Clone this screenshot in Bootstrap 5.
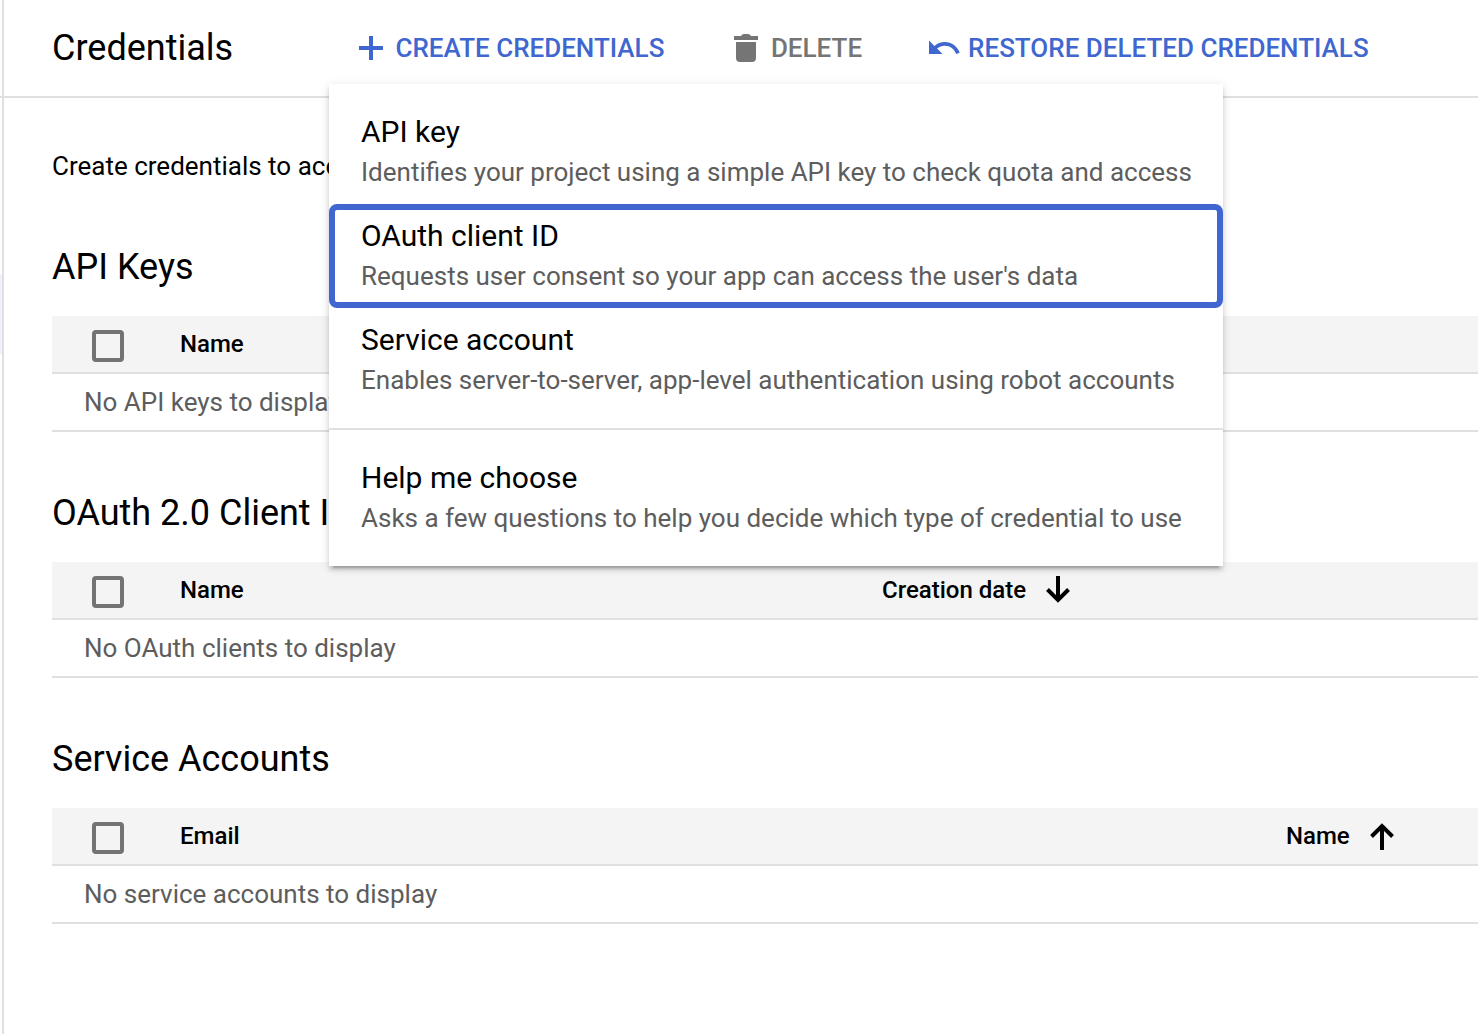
<!DOCTYPE html>
<html lang="en">
<head>
<meta charset="utf-8">
<meta name="viewport" content="width=device-width, initial-scale=1">
<title>Credentials</title>
<link href="https://cdn.jsdelivr.net/npm/bootstrap@5.3.0/dist/css/bootstrap.min.css" rel="stylesheet">
<style>
  :root { --accent: #4067d0; --line: #e0e0e0; --muted: #5d5d5d; --icon: #757575; }
  body { font-family: Roboto, "Liberation Sans", sans-serif; font-size: 26px; line-height: 36px; color: #000; background: #fff; height: 100vh; overflow: hidden; }
  .side-rail { width: 4px; border-right: 2px solid var(--line); padding-top: 274px; }
  .side-active { height: 80px; background: #eef1fb; }
  .topbar { height: 98px; border-bottom: 2px solid var(--line); margin-left: -4px; padding-left: 52px; }
  .page-title { font-size: 36px; line-height: 40px; font-weight: 400; width: 307px; }
  .action { --bs-btn-font-size: 26px; --bs-btn-line-height: 36px; --bs-btn-font-weight: 500; --bs-btn-padding-x: 0; --bs-btn-padding-y: 0; --bs-btn-border-width: 0; --bs-btn-color: var(--accent); --bs-btn-hover-color: var(--accent); --bs-btn-active-color: var(--accent); gap: 12.5px; }
  .action-off { --bs-btn-color: var(--icon); margin-left: 69.5px; gap: 13px; }
  .action-restore { margin-left: 64px; gap: 6px; }
  .create-menu.dropdown-menu { top: 54px; left: -30px; width: 894px; padding: 16px 0; margin: 0; border: 0; border-radius: 0; background: #fff; font-size: 26px;
    box-shadow: 0 6px 2px -4px rgba(0,0,0,.2), 0 4px 4px 0 rgba(0,0,0,.14), 0 2px 10px 0 rgba(0,0,0,.12); }
  .create-menu .dropdown-item { height: 104px; padding: 12px 32px; line-height: 40px; color: var(--muted); background: #fff; }
  .create-menu .item-title { font-size: 30px; color: #000; }
  .create-menu .item-focus { padding: 6px 26px; border: 6px solid var(--accent); border-radius: 8px; }
  .create-menu .dropdown-divider { margin: 16px 0; border-top: 2px solid var(--line); opacity: 1; }
  .content { padding: 50px 0 0 48px; }
  .intro { margin-bottom: 63px; }
  .group-title { font-size: 36px; line-height: 40px; font-weight: 400; margin-bottom: 29px; }
  .group { margin-bottom: 61px; }
  .cred-table { table-layout: fixed; border-collapse: separate; border-spacing: 0; color: #000; margin: 0; }
  .cred-table > thead > tr > th { height: 58px; padding: 0; background: #f4f4f4; border-bottom: 2px solid var(--line); font-size: 24px; line-height: 36px; font-weight: 500; vertical-align: middle; }
  .cred-table > tbody > tr > td { height: 58px; padding: 0 0 0 32px; border-bottom: 2px solid var(--line); color: var(--muted); background: #fff; vertical-align: middle; }
  .col-check { width: 128px; }
  .col-name { width: 702px; }
  .col-email { width: 1106px; }
  .cred-table .form-check-input { display: block; width: 32px; height: 32px; margin: 4px 0 0 40px; border: 4px solid #737373; border-radius: 4px; background-color: transparent; }
  svg { display: block; flex: none; }
</style>
</head>
<body>
<div class="d-flex h-100">
  <aside class="side-rail flex-shrink-0"><div class="side-active"></div></aside>
  <main class="flex-grow-1">
    <header class="topbar d-flex align-items-center">
      <h1 class="page-title mb-0">Credentials</h1>
      <div class="dropdown">
        <button type="button" class="btn action d-flex align-items-center" aria-expanded="true">
          <svg width="24" height="24" viewBox="0 0 24 24" fill="currentColor"><path d="M10 0h4v10h10v4H14v10h-4V14H0v-4h10z"/></svg>
          CREATE CREDENTIALS
        </button>
        <ul class="dropdown-menu create-menu show">
          <li><a class="dropdown-item" href="#"><div class="item-title">API key</div><div>Identifies your project using a simple API key to check quota and access</div></a></li>
          <li><a class="dropdown-item item-focus" href="#"><div class="item-title">OAuth client ID</div><div>Requests user consent so your app can access the user's data</div></a></li>
          <li><a class="dropdown-item" href="#"><div class="item-title">Service account</div><div>Enables server-to-server, app-level authentication using robot accounts</div></a></li>
          <li><hr class="dropdown-divider"></li>
          <li><a class="dropdown-item" href="#"><div class="item-title">Help me choose</div><div>Asks a few questions to help you decide which type of credential to use</div></a></li>
        </ul>
      </div>
      <button type="button" class="btn action action-off d-flex align-items-center">
        <svg width="24" height="28" viewBox="0 0 24 28" fill="currentColor"><path d="M0 2h7Q8 0 10 0h4q2 0 3 2h7v4H0zM2 8h20v16q0 4-4 4H6q-4 0-4-4z"/></svg>
        DELETE
      </button>
      <button type="button" class="btn action action-restore d-flex align-items-center">
        <svg width="36" height="36" viewBox="0 0 24 24" fill="currentColor"><path d="M12.5 8c-2.65 0-5.05.99-6.9 2.6L2 7v9h9l-3.62-3.62c1.39-1.16 3.16-1.88 5.12-1.88 3.54 0 6.55 2.31 7.6 5.5l2.37-.78C21.08 11.03 17.15 8 12.5 8z"/></svg>
        RESTORE DELETED CREDENTIALS
      </button>
    </header>
    <div class="content">
      <p class="intro">Create credentials to access</p>
      <section class="group">
        <h2 class="group-title">API Keys</h2>
        <table class="table cred-table">
          <thead><tr><th class="col-check"><input class="form-check-input" type="checkbox" aria-label="Select all"></th><th>Name</th></tr></thead>
          <tbody><tr><td colspan="2">No API keys to display</td></tr></tbody>
        </table>
      </section>
      <section class="group">
        <h2 class="group-title">OAuth 2.0 Client IDs</h2>
        <table class="table cred-table">
          <thead><tr><th class="col-check"><input class="form-check-input" type="checkbox" aria-label="Select all"></th><th class="col-name">Name</th>
            <th><div class="d-flex align-items-center">Creation date
              <svg class="ms-3" width="32" height="28" viewBox="-4 0 32 28" fill="none" stroke="currentColor" stroke-width="4"><path d="M12 0v25M1.5 13.5 12 24l10.5-10.5"/></svg></div></th></tr></thead>
          <tbody><tr><td colspan="3">No OAuth clients to display</td></tr></tbody>
        </table>
      </section>
      <section class="group">
        <h2 class="group-title">Service Accounts</h2>
        <table class="table cred-table">
          <thead><tr><th class="col-check"><input class="form-check-input" type="checkbox" aria-label="Select all"></th><th class="col-email">Email</th>
            <th><div class="d-flex align-items-center">Name
              <svg class="ms-3" width="32" height="28" viewBox="-4 0 32 28" fill="none" stroke="currentColor" stroke-width="4"><path d="M12 28V3M1.5 14.5 12 4l10.5 10.5"/></svg></div></th></tr></thead>
          <tbody><tr><td colspan="3">No service accounts to display</td></tr></tbody>
        </table>
      </section>
    </div>
  </main>
</div>
<script src="https://cdn.jsdelivr.net/npm/bootstrap@5.3.0/dist/js/bootstrap.bundle.min.js"></script>
</body>
</html>
